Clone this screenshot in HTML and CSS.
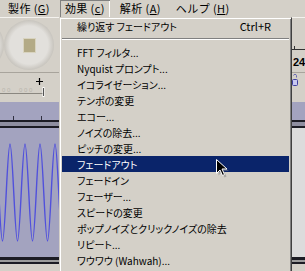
FILE: index.html
```html
<!DOCTYPE html>
<html lang="ja">
<head>
  <meta charset="UTF-8" />
  <title>効果メニュー</title>
  <link rel="stylesheet" href="styles.css">
</head>
<body>
  <div class="screen">
    <!-- メニューバー -->
    <nav class="menubar">
      <span class="menu-title">製作 (<u>G</u>)</span>
      <span class="menu-title open">効果 (<u>c</u>)</span>
      <span class="menu-title">解析 (<u>A</u>)</span>
      <span class="menu-title">ヘルプ (<u>H</u>)</span>
    </nav>

    <!-- ツールバー -->
    <div class="toolbar">
      <div class="round-btn edge"></div>
      <div class="round-btn"><span class="stop"></span></div>
      <div class="meter">
        <div class="meter-scale"><span class="meter-tick"></span></div>
        <span class="meter-num">24</span>
      </div>
    </div>

    <!-- タイムライン -->
    <div class="ruler">
      <svg class="ruler-scale" width="60" height="29" viewBox="0 0 60 29">
        <g fill="#b8b4ac" font-size="6" font-family="Liberation Sans, sans-serif">
          <text x="2" y="19">0 0</text>
          <text x="19" y="19">0 0 0</text>
        </g>
        <line x1="0" y1="20.5" x2="44" y2="20.5" stroke="#8a8780" />
        <line x1="43.5" y1="14" x2="43.5" y2="24" stroke="#fff" stroke-width="2" />
        <line x1="43.5" y1="15" x2="43.5" y2="23" stroke="#555" />
        <path d="M39.5 5v7M36 8.5h7" stroke="#000" stroke-width="1.2" />
      </svg>
      <svg class="lock-icon" width="13" height="29" viewBox="0 0 13 29">
        <path d="M1.5 2.5c0-1.5 3-1.5 3 0v2" fill="none" stroke="#6a6ab0" />
        <rect x="0.5" y="6.5" width="5" height="6" rx="1" fill="#c8c8f0" stroke="#4040a0" />
      </svg>
    </div>

    <!-- トラック -->
    <div class="track-gap">
      <span class="gap-tick first"></span>
      <span class="gap-tick"></span>
      <span class="track-end"></span>
    </div>
    <div class="track-divider"></div>
    <div class="track">
      <div class="wave-area">
        <svg width="62" height="129" viewBox="0 0 62 129">
          <path d="M-5 16 c2.725 0 4.775 97 7.5 97 s4.775 -97 7.5 -97 s4.775 97 7.5 97 s4.775 -97 7.5 -97 s4.775 97 7.5 97 s4.775 -97 7.5 -97 s4.775 97 7.5 97 s4.775 -97 7.5 -97 s4.775 97 7.5 97" fill="none" stroke="#5050dc" stroke-width="1.4" />
        </svg>
      </div>
      <div class="track-end"></div>
    </div>
    <div class="track-divider bottom"></div>

    <!-- 効果メニュー -->
    <ul class="dropdown">
      <li class="item">繰り返す フェードアウト<span class="shortcut">Ctrl+R</span></li>
      <li class="sep"></li>
      <li class="item">FFT フィルタ...</li>
      <li class="item">Nyquist プロンプト...</li>
      <li class="item">イコライゼーション...</li>
      <li class="item">テンポの変更</li>
      <li class="item">エコー...</li>
      <li class="item">ノイズの除去...</li>
      <li class="item">ピッチの変更...</li>
      <li class="item active">フェードアウト</li>
      <li class="item">フェードイン</li>
      <li class="item">フェーザー...</li>
      <li class="item">スピードの変更</li>
      <li class="item">ポップノイズとクリックノイズの除去</li>
      <li class="item">リピート...</li>
      <li class="item">ワウワウ (Wahwah)...</li>
      <li class="item">ワウ...</li>
    </ul>

    <!-- マウスカーソル -->
    <svg class="pointer" width="14" height="20" viewBox="0 0 14 20">
      <path d="M2.5 2.5v14l3.5-3.5 2.5 5.5 2-1-2.5-5.5h5z" fill="#808080" opacity="0.5" />
      <path d="M0.5 0.5v14l3.5-3.5 2.5 5.5 2-1-2.5-5.5h5z" fill="#000" stroke="#fff" stroke-width="1" stroke-linejoin="round" />
    </svg>
  </div>
</body>
</html>
```

FILE: styles.css
```css
body { margin:0; background:#d4d0c8; font-family:"Noto Sans CJK JP", "MS UI Gothic", sans-serif; font-size:10px; color:#000; }
.screen { position:relative; width:305px; height:271px; overflow:hidden; }

/* メニューバー */
.menubar { display:flex; height:17px; padding-left:3px; gap:5px; border-bottom:1px solid #f4f2ee; font-size:11px; letter-spacing:0.4px; }
.menu-title { padding:0 5px; line-height:17px; white-space:nowrap; }
.menu-title u { text-decoration-thickness:1px; text-underline-offset:1px; }
.menu-title.open { box-shadow:inset 1px 1px #808080, inset -1px 0 #fff; }

/* ツールバー */
.toolbar { display:flex; align-items:center; height:54px; border-bottom:1px solid #a8a49c; }
.round-btn { flex:none; width:50px; height:50px; border-radius:50%; display:flex; align-items:center; justify-content:center;
  background:radial-gradient(circle, #e2e0dc 0 54%, #cfccc6 66%, #bebbb4 76%, #ecebe8 88%, #d4d0c8 100%); }
.round-btn.edge { margin-left:-46px; }
.stop { width:11px; height:13px; background:#b3aa86; border:1px solid #d8d3bf; }
.meter { margin-left:auto; width:13px; align-self:stretch; overflow:hidden; }
.meter-scale { margin-top:31px; height:7px; border-top:1px solid #333; position:relative; }
.meter-tick { position:absolute; left:2px; top:-4px; width:1px; height:4px; background:#333; }
.meter-num { display:block; font:bold 11px/11px "Liberation Sans", sans-serif; margin-left:1px; }

/* タイムライン */
.ruler { display:flex; height:29px; }
.lock-icon { margin-left:auto; }

/* トラック */
.track-gap { display:flex; align-items:flex-end; height:18px; background:#a3a3bf; }
.gap-tick { width:1px; height:4px; background:#303040; margin-left:27px; }
.gap-tick.first { margin-left:13px; }
.track-gap .track-end { margin-left:auto; width:13px; height:100%; background:#a3a3bf; }
.track-divider { height:4px; border-top:2px solid #1c1c24; border-bottom:2px solid #1c1c24; background:#8e8ea0; }
.track { display:flex; height:129px; }
.wave-area { flex:1; background:#a3a3bf; }
.wave-area svg { display:block; }
.track-end { width:13px; background:#dcdcdc; border-left:1px solid #9a9a9a; }
.track-divider.bottom { height:2px; border-top-width:3px; background:#9c9c9c; }

/* 効果メニュー */
.dropdown { position:absolute; left:59px; top:17px; width:233px; height:270px; box-sizing:border-box; margin:0; padding:0 2px;
  list-style:none; background:#d4d0c8; border:1px solid; border-color:#d4d0c8 #404040 #404040 #d4d0c8;
  box-shadow:inset 1px 1px #fff, inset -1px -1px #808080; }
.item { display:flex; align-items:center; height:16px; padding:0 18px 0 15px; white-space:nowrap; font-feature-settings:"palt"; }
.item.active { background:#0a246a; color:#fff; }
.shortcut { margin-left:auto; font-size:11px; font-feature-settings:normal; }
.sep { height:10px; box-sizing:border-box; padding-top:4px; }
.sep::before { content:""; display:block; height:0; border-top:1px solid #808080; border-bottom:1px solid #fff; }

/* マウスカーソル */
.pointer { position:absolute; left:216px; top:159px; }
```
